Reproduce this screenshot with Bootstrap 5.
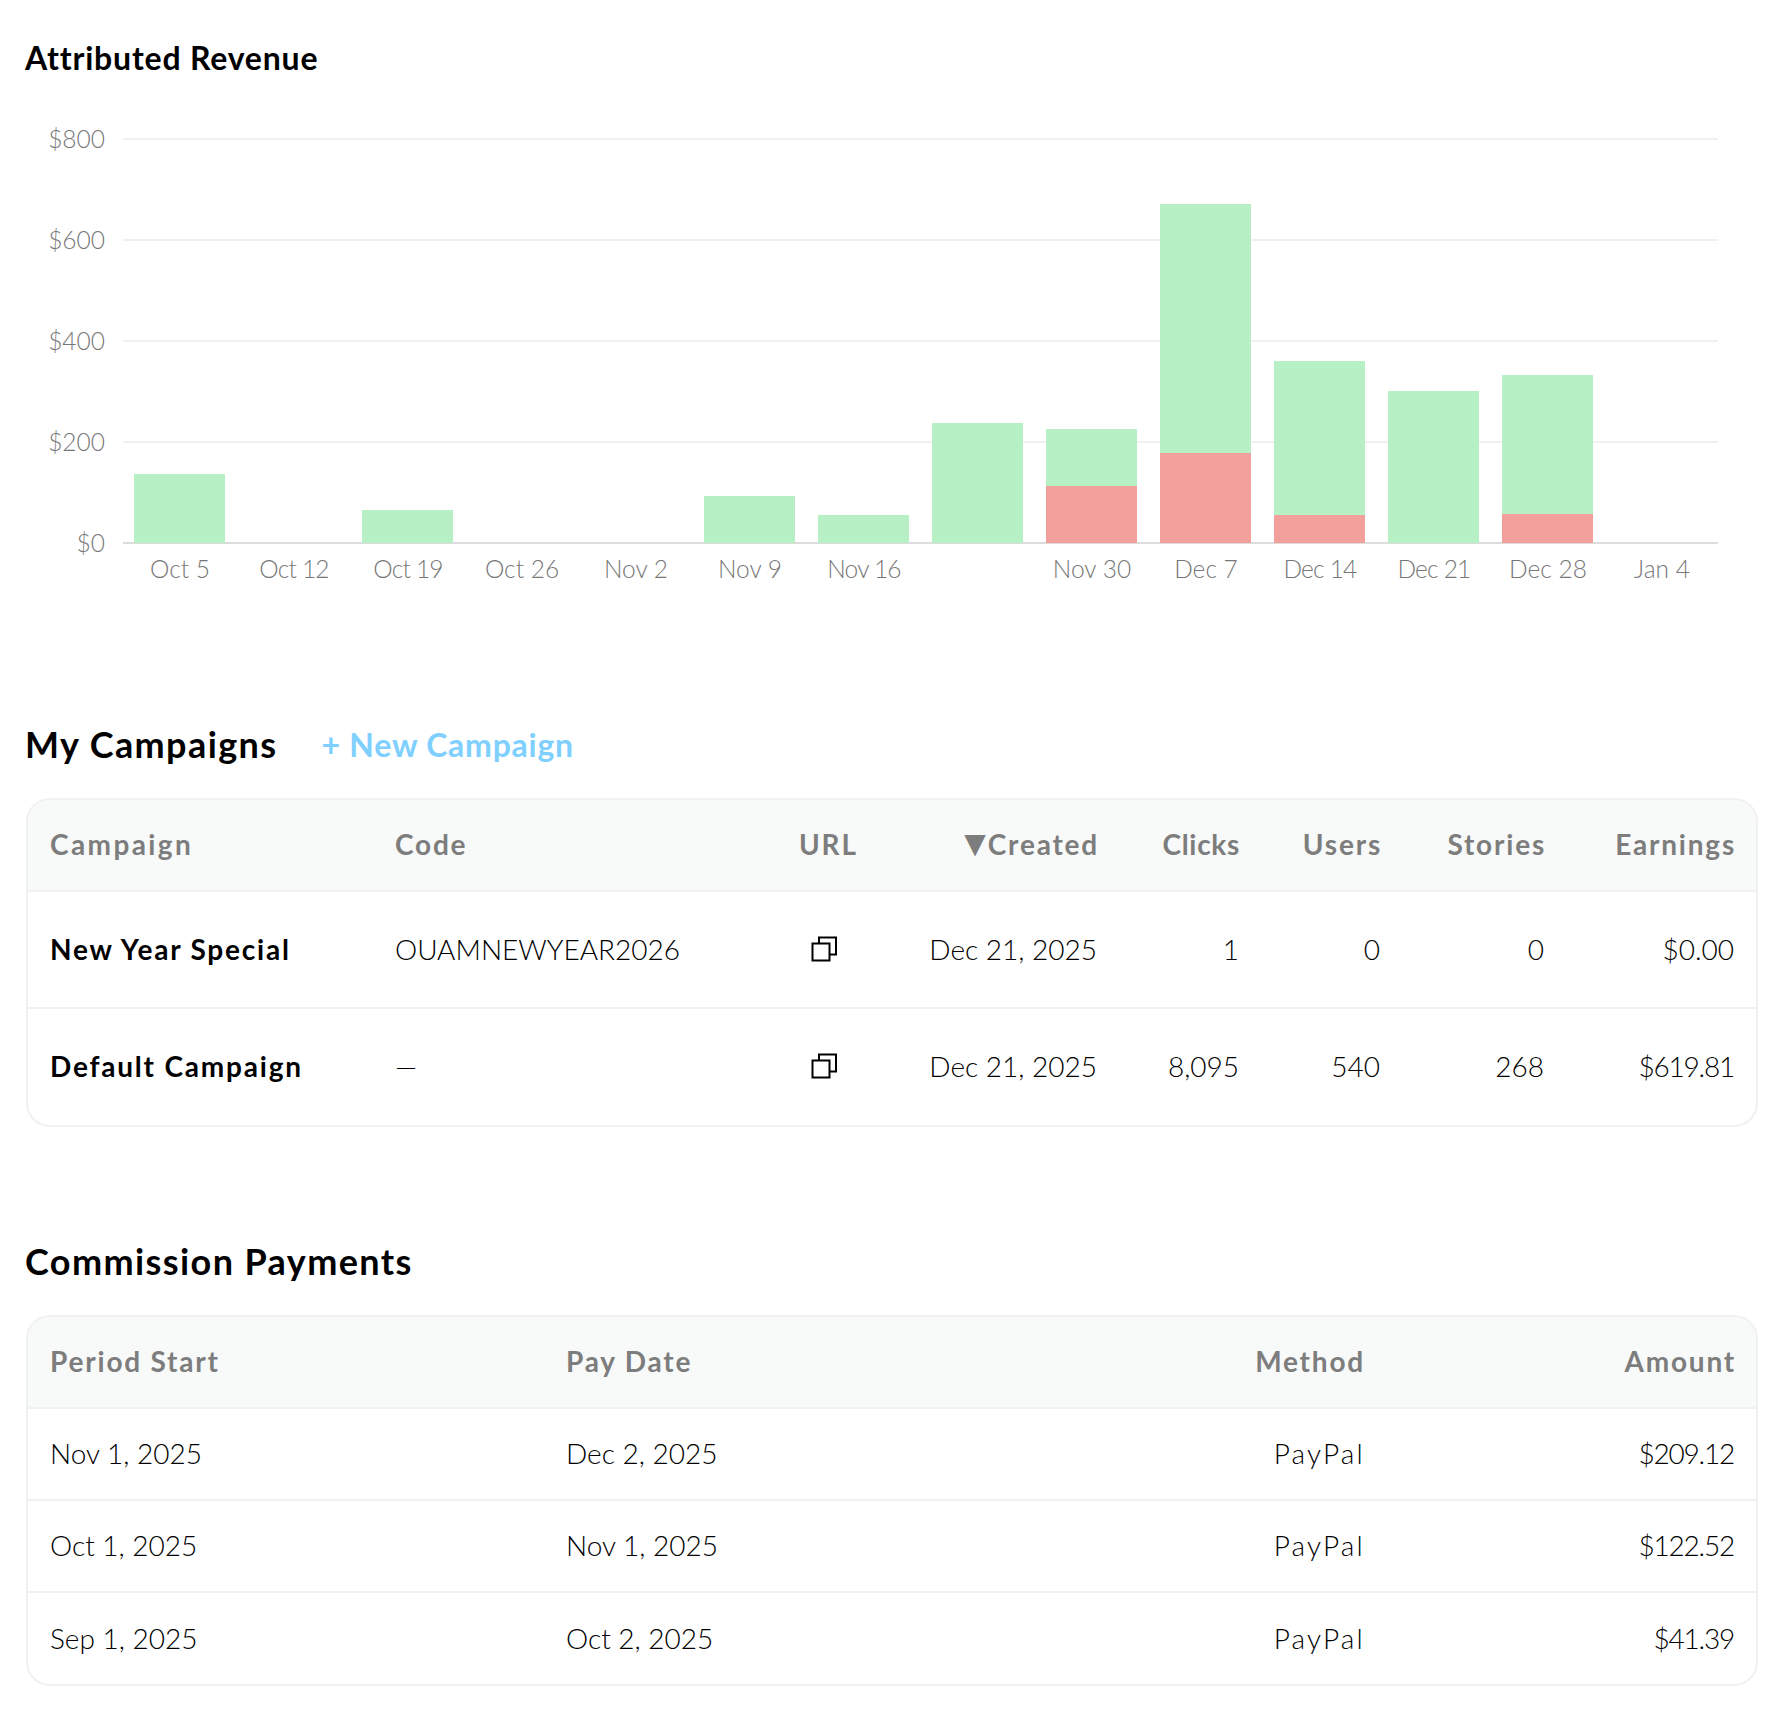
<!DOCTYPE html>
<html lang="en">
<head>
<meta charset="utf-8">
<title>Affiliate dashboard</title>
<link href="https://cdn.jsdelivr.net/npm/bootstrap@5.3.0/dist/css/bootstrap.min.css" rel="stylesheet">
<style>
body{font-family:"Lato","Noto Sans",sans-serif;background:#fff;color:#000;padding:0 26px;font-size:28px}
.sec-title{font-weight:700;color:#000;margin:0 0 0 -1px}
.t-rev{font-size:32px;line-height:38px;padding-top:39px;letter-spacing:.8px}
.t-camp{font-size:36px;line-height:43px;letter-spacing:1.4px}
.head-camp{margin-top:120px;height:48px}
.head-pay{margin-top:113px}
.new-link{font-size:32px;font-weight:700;color:#7fcfff;text-decoration:none;margin-left:44px;letter-spacing:.75px;padding-top:2px}
.chart-box{display:block;margin-top:43px}
.chart-box text{font-family:"Lato","Noto Sans",sans-serif;font-size:24.5px;font-weight:300;fill:#777}
.chart-box .nr{letter-spacing:-.8px}
.grid-l{stroke:#f0f0f0;stroke-width:2}
.base-l{stroke:#dcdcdc;stroke-width:2}
.g-bar{fill:#b7f0c4}
.r-bar{fill:#f39f9c}
.tbl-wrap{border:2px solid #f0f1f1;border-radius:24px;overflow:hidden;margin-top:30px}
.pay-wrap{margin-top:32px}
.data-tbl{table-layout:fixed;margin:0;width:100%}
.data-tbl th,.data-tbl td{padding:0 26px 2px 22px;vertical-align:middle;border-bottom:2px solid #f0f1f1;font-size:28px;font-weight:300;color:#000}
.data-tbl tr:last-child td{border-bottom:0}
.data-tbl th{background:#f8f9f9;color:#7d7d7d;font-weight:700;height:91px;letter-spacing:1.8px}
.data-tbl th.text-end{padding-right:24px}
.data-tbl th.ls-wide{letter-spacing:2.4px}
.data-tbl th.ls-tight{letter-spacing:.7px;padding-right:25px}
.camp-tbl td{height:117px}
.pay-tbl td{height:92px}
.data-tbl .camp-name{font-weight:700;letter-spacing:1.8px}
.data-tbl td.money{letter-spacing:-1.2px}
.data-tbl td.method{letter-spacing:2.2px;padding-right:24px}
.copy-ic{width:26px;height:26px;display:block;margin-left:12px}
.tri{font-family:"DejaVu Sans",sans-serif;font-size:28px;line-height:1;letter-spacing:0;margin-right:2px;position:relative;top:-2px}
</style>
</head>
<body>
<h2 class="sec-title t-rev">Attributed Revenue</h2>

<svg class="chart-box" width="1732" height="480" viewBox="26 120 1732 480" role="img" aria-label="Attributed revenue chart">
  <g text-anchor="end">
    <text x="105" y="148">$800</text>
    <text x="105" y="249">$600</text>
    <text x="105" y="350">$400</text>
    <text x="105" y="451">$200</text>
    <text x="105" y="552">$0</text>
  </g>
  <line class="grid-l" x1="123" x2="1718" y1="139" y2="139"/>
  <line class="grid-l" x1="123" x2="1718" y1="240" y2="240"/>
  <line class="grid-l" x1="123" x2="1718" y1="341" y2="341"/>
  <line class="grid-l" x1="123" x2="1718" y1="442" y2="442"/>
  <line class="base-l" x1="123" x2="1718" y1="543" y2="543"/>
  <rect class="g-bar" x="134" y="474" width="91" height="69"/>
  <rect class="g-bar" x="362" y="510" width="91" height="33"/>
  <rect class="g-bar" x="704" y="496" width="91" height="47"/>
  <rect class="g-bar" x="818" y="515" width="91" height="28"/>
  <rect class="g-bar" x="932" y="423" width="91" height="120"/>
  <rect class="g-bar" x="1046" y="429" width="91" height="57"/>
  <rect class="r-bar" x="1046" y="486" width="91" height="57"/>
  <rect class="g-bar" x="1160" y="204" width="91" height="249"/>
  <rect class="r-bar" x="1160" y="453" width="91" height="90"/>
  <rect class="g-bar" x="1274" y="361" width="91" height="154"/>
  <rect class="r-bar" x="1274" y="515" width="91" height="28"/>
  <rect class="g-bar" x="1388" y="391" width="91" height="152"/>
  <rect class="g-bar" x="1502" y="375" width="91" height="139"/>
  <rect class="r-bar" x="1502" y="514" width="91" height="29"/>
  <g text-anchor="middle">
    <text x="180" y="578">Oct 5</text>
    <text class="nr" x="294" y="578">Oct 12</text>
    <text class="nr" x="408" y="578">Oct 19</text>
    <text x="522" y="578">Oct 26</text>
    <text x="636" y="578">Nov 2</text>
    <text x="750" y="578">Nov 9</text>
    <text class="nr" x="864" y="578">Nov 16</text>
    <text x="1092" y="578">Nov 30</text>
    <text x="1206" y="578">Dec 7</text>
    <text class="nr" x="1320" y="578">Dec 14</text>
    <text class="nr" x="1434" y="578">Dec 21</text>
    <text x="1548" y="578">Dec 28</text>
    <text x="1662" y="578">Jan 4</text>
  </g>
</svg>

<div class="d-flex align-items-center head-camp">
  <h2 class="sec-title t-camp">My Campaigns</h2>
  <a class="new-link" href="#">+ New Campaign</a>
</div>

<div class="tbl-wrap">
  <table class="table data-tbl camp-tbl">
    <colgroup><col style="width:345px"><col style="width:404px"><col style="width:105px"><col style="width:241px"><col style="width:142px"><col style="width:141px"><col style="width:164px"><col style="width:190px"></colgroup>
    <thead><tr><th class="ls-wide">Campaign</th><th>Code</th><th>URL</th><th class="text-end"><span class="tri">▼</span>Created</th><th class="text-end ls-tight">Clicks</th><th class="text-end">Users</th><th class="text-end">Stories</th><th class="text-end">Earnings</th></tr></thead>
    <tbody>
      <tr><td class="camp-name">New Year Special</td><td>OUAMNEWYEAR2026</td>
        <td><svg class="copy-ic" viewBox="0 0 26 26" fill="none" stroke="#000" stroke-width="2"><path d="M8 7V1.5h17v17h-6"/><rect x="1.5" y="7.5" width="17" height="17"/></svg></td>
        <td class="text-end">Dec 21, 2025</td><td class="text-end">1</td><td class="text-end">0</td><td class="text-end">0</td><td class="text-end">$0.00</td></tr>
      <tr><td class="camp-name">Default Campaign</td><td>—</td>
        <td><svg class="copy-ic" viewBox="0 0 26 26" fill="none" stroke="#000" stroke-width="2"><path d="M8 7V1.5h17v17h-6"/><rect x="1.5" y="7.5" width="17" height="17"/></svg></td>
        <td class="text-end">Dec 21, 2025</td><td class="text-end">8,095</td><td class="text-end">540</td><td class="text-end">268</td><td class="text-end money">$619.81</td></tr>
    </tbody>
  </table>
</div>

<h2 class="sec-title t-camp head-pay">Commission Payments</h2>

<div class="tbl-wrap pay-wrap">
  <table class="table data-tbl pay-tbl">
    <colgroup><col style="width:516px"><col style="width:500px"><col style="width:345px"><col style="width:371px"></colgroup>
    <thead><tr><th>Period Start</th><th>Pay Date</th><th class="text-end">Method</th><th class="text-end">Amount</th></tr></thead>
    <tbody>
      <tr><td>Nov 1, 2025</td><td>Dec 2, 2025</td><td class="text-end method">PayPal</td><td class="text-end money">$209.12</td></tr>
      <tr><td>Oct 1, 2025</td><td>Nov 1, 2025</td><td class="text-end method">PayPal</td><td class="text-end money">$122.52</td></tr>
      <tr><td>Sep 1, 2025</td><td>Oct 2, 2025</td><td class="text-end method">PayPal</td><td class="text-end money">$41.39</td></tr>
    </tbody>
  </table>
</div>
<script src="https://cdn.jsdelivr.net/npm/bootstrap@5.3.0/dist/js/bootstrap.bundle.min.js"></script>
</body>
</html>
